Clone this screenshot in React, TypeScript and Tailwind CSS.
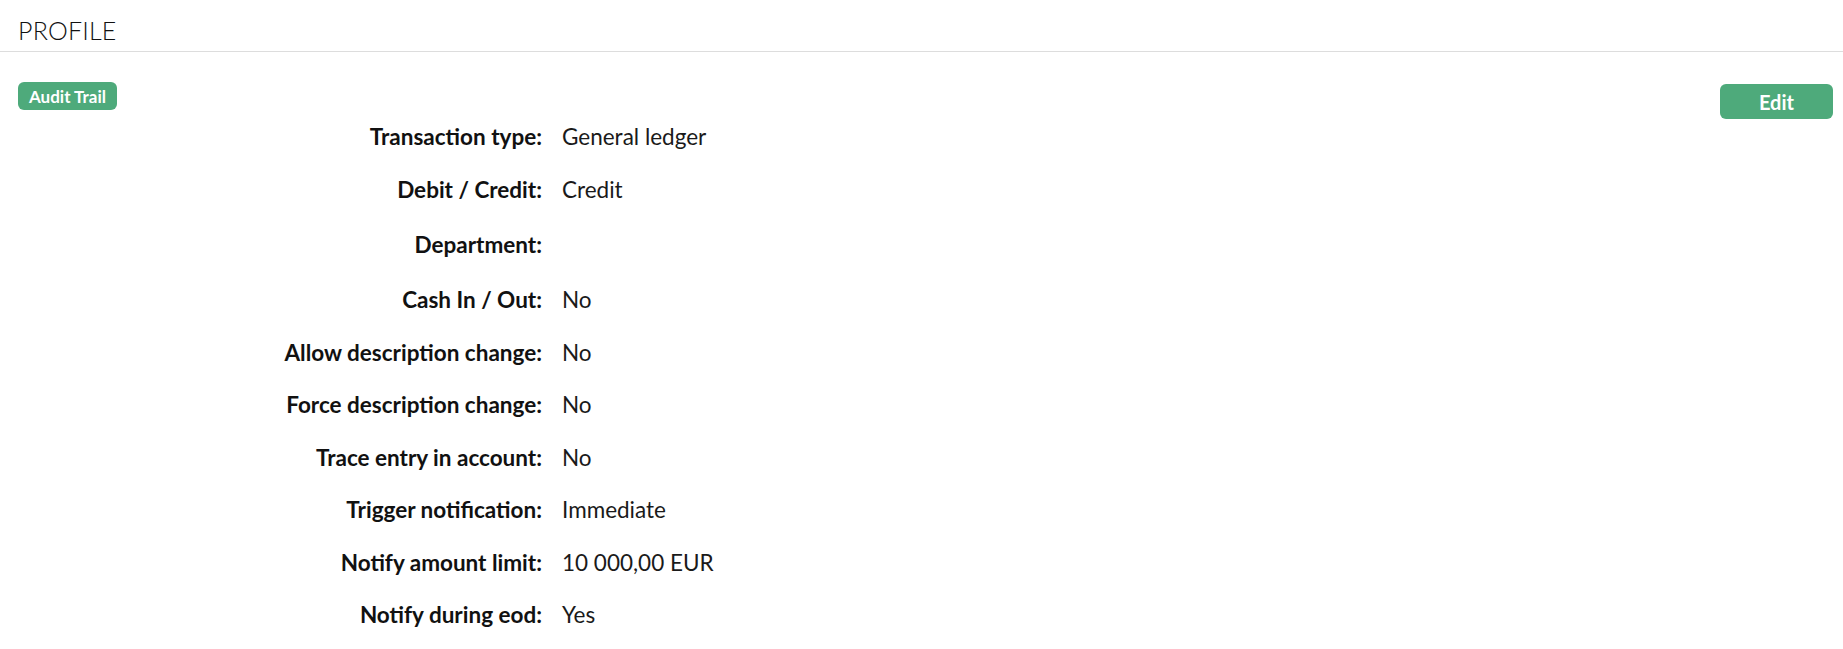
const rows: { label: string; value: string; h: string }[] = [
  { label: "Transaction type:", value: "General ledger", h: "h-[53px]" },
  { label: "Debit / Credit:", value: "Credit", h: "h-[53px]" },
  { label: "Department:", value: "", h: "h-[58px]" },
  { label: "Cash In / Out:", value: "No", h: "h-[52.5px]" },
  { label: "Allow description change:", value: "No", h: "h-[52.5px]" },
  { label: "Force description change:", value: "No", h: "h-[52.5px]" },
  { label: "Trace entry in account:", value: "No", h: "h-[52.5px]" },
  { label: "Trigger notification:", value: "Immediate", h: "h-[52.5px]" },
  { label: "Notify amount limit:", value: "10 000,00 EUR", h: "h-[52.5px]" },
  { label: "Notify during eod:", value: "Yes", h: "h-[52.5px]" },
];

export default function App() {
  return (
    <main
      className="min-h-[649px] w-full bg-white text-[#111]"
      style={{ fontFamily: "Lato, 'Open Sans', sans-serif" }}
    >
      {/* HEADER */}
      <div className="h-[52px] border-b border-[#dddddd] px-[18px] pt-[11px] flex items-center">
        <h1 className="text-[25px] font-light tracking-[0.2px] text-[#111]">PROFILE</h1>
      </div>

      {/* ACTIONS */}
      <div className="px-[18px] mt-[30px] mr-[-8px]">
        <div className="h-[28px] flex items-start justify-between">
          <button className="h-[28px] w-[99px] rounded-[6px] bg-[#4eaa7b] text-white text-[17px] font-bold leading-none">
            Audit Trail
          </button>
          <button className="mt-[2px] h-[35px] w-[113px] rounded-[6px] bg-[#4eaa7b] text-white text-[20px] font-bold leading-none">
            Edit
          </button>
        </div>
      </div>

      {/* DETAILS */}
      <div className="px-[18px]">
        {rows.map((r) => (
          <div key={r.label} className={`${r.h} flex items-center`}>
            <div className="w-[524px] text-right text-[22.5px] font-bold">{r.label}</div>
            <div className="ml-[20px] text-[22.5px] text-[#1a1a1a]">{r.value}</div>
          </div>
        ))}
      </div>
    </main>
  );
}
